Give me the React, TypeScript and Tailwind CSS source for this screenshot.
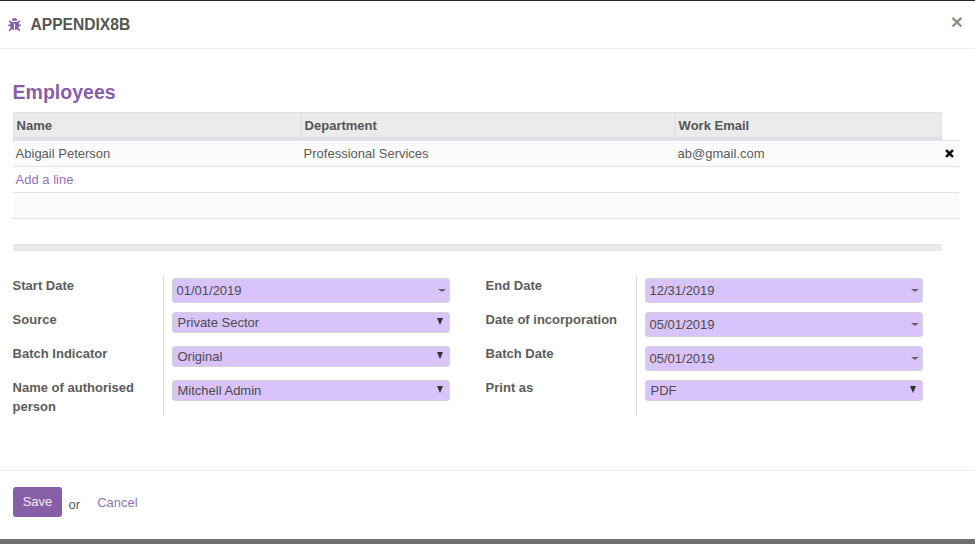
import React from "react";
import { FaBug, FaTimes } from "react-icons/fa";

const Caret = ({ kind }: { kind: "date" | "select" }) =>
  kind === "date" ? (
    <span className="absolute right-[3px] top-[10px] w-0 h-0 border-x-[4px] border-x-transparent border-t-[3px] border-t-[#62626c]" />
  ) : (
    <span className="absolute right-[6px] top-[5px] w-0 h-0 border-x-[3px] border-x-transparent border-t-[7px] border-t-[#333333]" />
  );

const Field = ({ kind, value }: { kind: "date" | "select"; value: string }) => (
  <div
    className={
      "relative mt-[2px] w-[278px] rounded-[3px] border border-[#d4d4d4] bg-[#d9c3fb] text-[13px] text-[#4c4c4c] " +
      (kind === "date" ? "h-[25px] pl-[3.5px] leading-[23px]" : "h-[21px] pl-[4.5px] leading-[19px]")
    }
  >
    {value}
    <Caret kind={kind} />
  </div>
);

const Row = ({ label, kind, value, tall }: { label: string; kind: "date" | "select"; value: string; tall?: boolean }) => (
  <div className={"flex " + (tall ? "h-[38px]" : "h-[34px]")}>
    <div className="w-[150px] -translate-x-[0.4px] pr-[8px] text-[13px] font-bold leading-[19px] text-[#5c5c5c]">{label}</div>
    <div className="border-l border-[#d9d7d7] pl-[8px]">
      <Field kind={kind} value={value} />
    </div>
  </div>
);

const Th = ({ w, label, last }: { w: string; label: string; last?: boolean }) => (
  <div className={w + " pl-[2.6px] pt-[4px] text-[13px] font-bold leading-[18px] text-[#555555] " + (last ? "" : "border-r-2 border-[#e2e2e8]")}>
    {label}
  </div>
);

export default function App() {
  return (
    <div className="flex h-[544px] w-[975px] flex-col overflow-hidden bg-white font-['Liberation_Sans',sans-serif] text-[13px] text-[#4c4c4c]">
      <div className="h-px bg-[#2c2333]" />
      <header className="relative flex h-[48px] items-center border-b border-[#e9e9ef] pl-[8px]">
        <FaBug className="h-[13px] w-[13px] text-[#875fa8]" />
        <h1 className="ml-[9.5px] mt-[1px] text-[15.6px] font-bold leading-none text-[#555555]">APPENDIX8B</h1>
        <span className="absolute right-[12px] top-[8px] text-[21px] font-bold leading-[26px] text-[#8f8f8f]">×</span>
      </header>

      <main className="flex-1 pl-[13px] pr-[16px]">
        <h2 className="mt-[30px] -translate-x-[0.4px] text-[19.5px] font-bold leading-[26px] text-[#875fa8]">Employees</h2>
        <div className="mt-[7px]">
          <div className="flex h-[28px] w-[929px] border-x border-t border-b-[3px] border-[#dfdfe8] border-x-[#e2e2e8] bg-[#ebebeb]">
            <Th w="w-[288px]" label="Name" />
            <Th w="w-[374px]" label="Department" />
            <Th w="flex-1" label="Work Email" last />
          </div>
          <div className="relative flex h-[27px] items-center border-y border-[#e2e2e8] bg-[#fbfbfb] leading-[24px] text-[#5c5c5c]">
            <span className="ml-[2.6px] w-[288px]">Abigail Peterson</span>
            <span className="w-[374px]">Professional Services</span>
            <span>ab@gmail.com</span>
            <FaTimes className="absolute right-[4px] top-[7px] h-[11px] w-[11px] text-black" stroke="currentColor" strokeWidth={30} />
          </div>
          <div className="h-[26px] border-b border-[#e2e2e8] pl-[2.6px] leading-[25px] text-[#9373b4]">Add a line</div>
          <div className="h-[26px] border-b border-[#e2e2e8] bg-[#fbfbfb]" />
          <div className="mt-[25px] h-[7px] w-[929px] border-t border-[#e2e2e8] bg-[#ebebeb]" />
        </div>

        <div className="mt-[25px] flex">
          <div className="w-[473px]">
            <Row label="Start Date" kind="date" value="01/01/2019" />
            <Row label="Source" kind="select" value="Private Sector" />
            <Row label="Batch Indicator" kind="select" value="Original" />
            <Row label="Name of authorised person" kind="select" value="Mitchell Admin" tall />
          </div>
          <div>
            <Row label="End Date" kind="date" value="12/31/2019" />
            <Row label="Date of incorporation" kind="date" value="05/01/2019" />
            <Row label="Batch Date" kind="date" value="05/01/2019" />
            <Row label="Print as" kind="select" value="PDF" tall />
          </div>
        </div>
      </main>

      <footer className="flex h-[69px] items-start border-t border-[#eeeeee] pl-[13px] pt-[16px]">
        <button className="h-[30px] w-[49px] rounded-[3px] bg-[#875fa8] text-[13px] text-[#f0e8f5]">Save</button>
        <span className="ml-[7px] mt-[9px] -translate-x-[0.4px] leading-[18px] text-[#5c5c5c]">or</span>
        <span className="ml-[16.6px] mt-[7px] leading-[18px] text-[#9373b4]">Cancel</span>
      </footer>
      <div className="h-[5px] bg-[#6f6f6f]" />
    </div>
  );
}
